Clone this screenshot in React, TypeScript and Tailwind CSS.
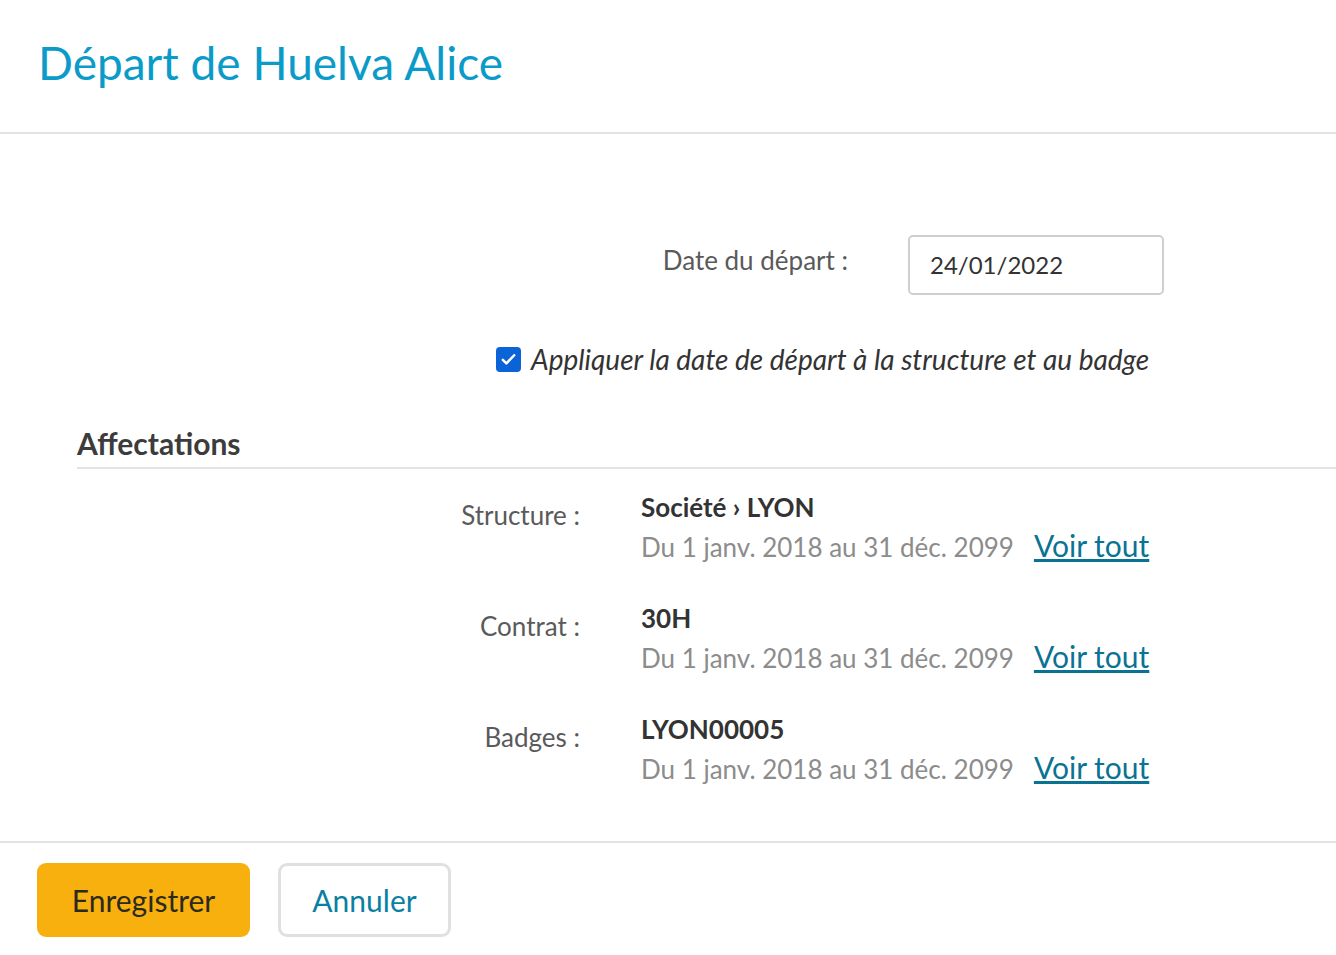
import React from "react";

const font = { fontFamily: "Lato, 'Open Sans', sans-serif" };

const Assignment = ({
  label,
  value,
}: {
  label: string;
  value: React.ReactNode;
}) => (
  <div className="flex">
    <div className="w-[503px] pt-[7px] text-right text-[26px] text-[#5a5a5a] leading-[32px]">
      {label}
    </div>
    <div className="ml-[61px]">
      <div className="text-[26px] font-bold text-[#333] leading-[30px]">{value}</div>
      <div className="mt-[7px] flex items-baseline gap-[20px]">
        <span className="text-[26px] text-[#8c8c8c] leading-[32px]">
          Du 1 janv. 2018 au 31 déc. 2099
        </span>
        <a href="#" className="text-[30px] text-[#0a7394] underline leading-[32px]">
          Voir tout
        </a>
      </div>
    </div>
  </div>
);

export default function App() {
  return (
    <div className="w-[1336px] h-[955px] bg-white flex flex-col" style={font}>
      {/* En-tête */}
      <div className="h-[134px] border-b-2 border-[#e3e3e3] px-[38px] flex items-center">
        <h1 className="text-[46px] text-[#0a9bc9] leading-none -mt-[6px]">
          Départ de Huelva Alice
        </h1>
      </div>

      <div className="flex-1">
        <div className="mt-[101px] flex items-center w-[1164px] justify-end">
          <label className="text-[26px] text-[#5a5a5a] -mt-[10px]">Date du départ :</label>
          <div className="ml-[60px] w-[256px] h-[60px] border-2 border-[#cfcfcf] rounded-[5px] flex items-center px-[20px] text-[24px] text-[#333]">
            24/01/2022
          </div>
        </div>

        <div className="mt-[43px] pl-[496px] flex items-center gap-[10px]">
          <span className="w-[25px] h-[25px] rounded-[4px] bg-[#0b63d8] flex items-center justify-center">
            <svg width="17" height="17" viewBox="0 0 24 24" fill="none" stroke="white" strokeWidth="3.5" strokeLinecap="round" strokeLinejoin="round">
              <path d="M4 12.5l5 5L20 6" />
            </svg>
          </span>
          <span className="italic text-[28px] text-[#333]">
            Appliquer la date de départ à la structure et au badge
          </span>
        </div>

        <div className="ml-[77px] mt-[45px] border-b-2 border-[#e3e3e3] pb-[6px]">
          <h2 className="text-[30px] font-bold text-[#3c3c3c] leading-[36px]">Affectations</h2>
        </div>

        <div className="ml-[77px] mt-[23px] flex flex-col gap-[40px]">
          <Assignment label="Structure :" value={<>Société › LYON</>} />
          <Assignment label="Contrat :" value="30H" />
          <Assignment label="Badges :" value="LYON00005" />
        </div>
      </div>

      {/* Pied */}
      <div className="h-[114px] border-t-2 border-[#e3e3e3] px-[37px] pt-[20px] flex gap-[28px]">
        <button className="w-[213px] h-[74px] rounded-[9px] bg-[#f8b00e] text-[30px] text-[#2b2a1e]">
          Enregistrer
        </button>
        <button className="w-[173px] h-[74px] rounded-[9px] border-[3px] border-[#e0e0e0] bg-white text-[30px] text-[#0b7fa3]">
          Annuler
        </button>
      </div>
    </div>
  );
}
